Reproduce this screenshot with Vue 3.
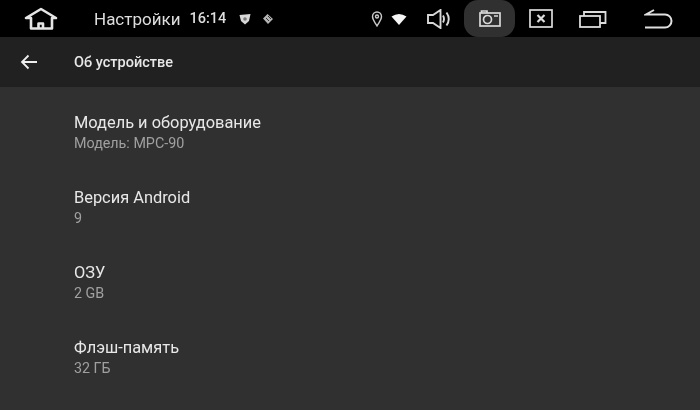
<template>
  <div class="screen">
    <!-- status bar -->
    <div class="status-bar">
      <svg class="home" width="36" height="28" viewBox="0 0 36 28" fill="none" stroke="#e6e6e6" stroke-width="2.600" stroke-linejoin="round">
        <path d="M3 13 L18 4 L33 13 H29 V23.500 H8 V13 Z" />
        <path d="M15.500 23 V18.500 H20 V23" />
      </svg>
      <span class="app-name">Настройки</span>
      <span class="clock">16:14</span>
      <svg class="small-a" width="12" height="12" viewBox="0 0 12 12">
        <path d="M0.500 2 L6 1.500 L11.500 1 L10 8 L6 11.500 L2 8 Z" fill="#d8d8d8" />
        <circle cx="6" cy="6" r="1.800" fill="#777" />
      </svg>
      <svg class="small-b" width="12" height="12" viewBox="0 0 12 12">
        <path d="M5.500 1 L11 6 L6 11 L1 5.500 Z" fill="#b4b4b4" />
        <path d="M4 5 L7 8 M6 3 L9 6" stroke="#333" stroke-width="1" />
      </svg>
      <div class="spacer"></div>
      <svg class="pin" width="12" height="16" viewBox="0 0 12 16" fill="none" stroke="#c8c8c8" stroke-width="1.400">
        <path d="M6 15 C3 10 1.500 8.500 1.500 5.500 A4.500 4.500 0 0 1 10.500 5.500 C10.500 8.500 9 10 6 15 Z" />
        <circle cx="6" cy="5.500" r="1.500" />
      </svg>
      <svg class="wifi" width="16" height="12" viewBox="0 0 16 12">
        <path d="M0.500 3.500 Q8 -1.500 15.500 3.500 L8 12 Z" fill="#f6f6f6" />
      </svg>
      <svg class="volume" width="24" height="20" viewBox="0 0 24 20" fill="none" stroke="#d8d8d8" stroke-width="1.900">
        <path d="M1 6 H6 L13.500 1 V19 L6 14 H1 Z" />
        <path d="M16 6.500 Q18 10 16 13.500 M19.500 3.500 Q24 10 19.500 16.500" />
      </svg>
      <div class="camera-btn">
        <svg width="22" height="17" viewBox="0 0 22 17" fill="none" stroke="#d8d8d8" stroke-width="1.700">
          <rect x="1" y="3" width="20" height="13" />
          <circle cx="8.500" cy="9.500" r="4" />
          <path d="M2.500 3 V1 H8 V3 M15 6 H19" />
        </svg>
      </div>
      <svg class="close-box" width="24" height="19" viewBox="0 0 24 19" fill="none" stroke="#dcdcdc" stroke-width="1.700">
        <rect x="1" y="1" width="22" height="17" />
        <path d="M8.500 6 L15.500 13 M15.500 6 L8.500 13" stroke-width="2.200" />
      </svg>
      <svg class="windows" width="28" height="18" viewBox="0 0 28 18" fill="none" stroke="#dcdcdc" stroke-width="1.800">
        <rect x="1" y="6" width="20" height="11" />
        <path d="M5 6 V2 H26.500 V13 H21" />
      </svg>
      <svg class="back" width="30" height="20" viewBox="0 0 30 20" fill="none" stroke="#e0e0e0" stroke-width="2">
        <path d="M10 1 L2 5.500 H21 A6.500 6.500 0 0 1 21 18.500 H1" />
      </svg>
    </div>

    <!-- title bar -->
    <div class="title-bar">
      <svg class="arrow" width="18" height="16" viewBox="0 0 18 16" fill="none" stroke="#eeeeee" stroke-width="1.800">
        <path d="M17 8 H2 M8.500 1.500 L2 8 L8.500 14.500" />
      </svg>
      <span class="title">Об устройстве</span>
    </div>

    <!-- list -->
    <div class="list">
      <div v-for="item in items" :key="item.name" class="row">
        <div class="row-name">{{ item.name }}</div>
        <div class="row-value">{{ item.value }}</div>
      </div>
    </div>
  </div>
</template>

<script setup>
const items = [
  { name: 'Модель и оборудование', value: 'Модель: MPC-90' },
  { name: 'Версия Android', value: '9' },
  { name: 'ОЗУ', value: '2 GB' },
  { name: 'Флэш-память', value: '32 ГБ' }
]
</script>

<style>
html, body {
  margin: 0;
  background: #303030;
}
</style>

<style scoped>
.screen {
  width: 700px;
  height: 410px;
  overflow: hidden;
  background: #303030;
  font-family: Roboto, "Liberation Sans", sans-serif;
  display: flex;
  flex-direction: column;
  filter: blur(0.4px);
}

.status-bar {
  height: 37px;
  background: #000;
  display: flex;
  align-items: center;
  flex: none;
}

.home {
  margin-left: 23px;
}

.app-name {
  margin-left: 35px;
  font-size: 17px;
  color: #dedede;
}

.clock {
  margin-left: 9px;
  font-size: 14.500px;
  font-weight: 500;
  color: #dedede;
}

.small-a {
  margin-left: 13px;
}

.small-b {
  margin-left: 11px;
}

.spacer {
  flex: 1;
}

.wifi {
  margin-left: 8px;
}

.volume {
  margin-left: 20px;
}

.camera-btn {
  margin-left: 13px;
  width: 51px;
  height: 37px;
  background: #303030;
  border-radius: 14px;
  display: flex;
  align-items: center;
  justify-content: center;
}

.close-box {
  margin-left: 14px;
}

.windows {
  margin-left: 26px;
}

.back {
  margin-left: 37px;
  margin-right: 26px;
}

.title-bar {
  height: 50px;
  background: #212121;
  display: flex;
  align-items: center;
  flex: none;
}

.arrow {
  margin-left: 20px;
}

.title {
  margin-left: 36px;
  font-size: 14.500px;
  font-weight: 500;
  color: #e8e8e8;
}

.list {
  padding-left: 74px;
  padding-top: 26px;
  display: flex;
  flex-direction: column;
  gap: 35px;
}

.row {
  height: 40px;
}

.row-name {
  font-size: 16.400px;
  line-height: 20px;
  margin-bottom: 1px;
  color: #e8e8e8;
}

.row-value {
  font-size: 14.300px;
  line-height: 18px;
  color: #a0a0a0;
}
</style>
